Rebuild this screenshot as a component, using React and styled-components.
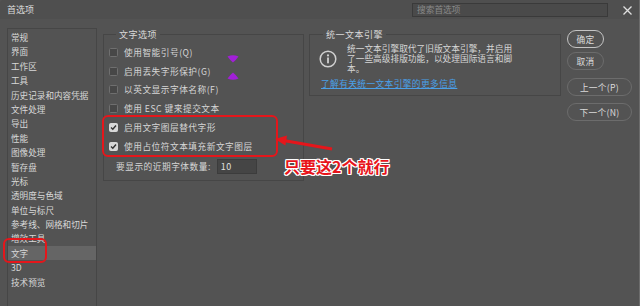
import React from "react";
import styled, { createGlobalStyle } from "styled-components";

const Global = createGlobalStyle`
  html, body { margin: 0; padding: 0; background: #535353; }
  #root { width: 640px; height: 306px; }
`;

const Window = styled.div`
  position: relative;
  width: 640px;
  height: 306px;
  overflow: hidden;
  box-sizing: border-box;
  background: #535353;
  border-right: 1px solid #6c6c6c;
  font-family: "Noto Sans CJK SC", "Noto Sans", sans-serif;
  color: #d6d6d6;
`;

const TitleBar = styled.div`
  height: 19px;
  display: flex;
  align-items: center;
  padding-left: 7px;
  background: #4f4f4f;
  border-top-left-radius: 4px;
`;

const Title = styled.div`
  font-size: 9px;
  color: #dcdcdc;
`;

const Search = styled.div`
  margin-left: auto;
  width: 196px;
  height: 14px;
  box-sizing: border-box;
  border: 1px solid #3a3a3a;
  background: #4a4a4a;
  font-size: 8.7px;
  line-height: 12px;
  padding-left: 4px;
  color: #8a8a8a;
`;

const Close = styled.svg`
  margin: 1px 7px 0 15px;
  width: 9px;
  height: 9px;
`;

const Body = styled.div`
  display: flex;
  align-items: flex-start;
  padding: 9px 0 0 7px;
`;

const Sidebar = styled.div`
  width: 90px;
  height: 300px;
  box-sizing: border-box;
  border: 1px solid #464646;
  padding-top: 1px;
`;

const SideItem = styled.div`
  height: 14.4px;
  line-height: 14.4px;
  padding-left: 3px;
  font-size: 8.6px;
  white-space: nowrap;
  background: ${(p) => (p.$active ? "#656565" : "transparent")};
  color: #d8d8d8;
`;

const Group = styled.fieldset`
  margin: 0 0 0 ${(p) => p.$ml}px;
  width: ${(p) => p.$w}px;
  box-sizing: border-box;
  min-width: 0;
  border: 1px solid #464646;
  padding: ${(p) => p.$pad};
`;

const Legend = styled.legend`
  font-size: 9px;
  letter-spacing: 0.5px;
  line-height: 13px;
  padding: 0 3px;
  margin-left: ${(p) => p.$ml}px;
  color: #d8d8d8;
`;

const CheckRow = styled.div`
  height: 18.75px;
  display: flex;
  align-items: center;
  gap: 6px;
  font-size: 8.7px;
  letter-spacing: 0.5px;
  white-space: nowrap;
`;

const Box = styled.span`
  width: 9px;
  height: 9px;
  box-sizing: border-box;
  border-radius: 1.5px;
  border: 1px solid ${(p) => (p.$checked ? "#d8d8d8" : "#6f6f6f")};
  background: ${(p) => (p.$checked ? "#d8d8d8" : "#474747")};
  display: flex;
  align-items: center;
  justify-content: center;
  flex: none;
`;

const FieldRow = styled.div`
  height: 22px;
  display: flex;
  align-items: center;
  gap: 6px;
  padding-left: 7px;
  font-size: 8.7px;
  letter-spacing: 0.5px;
  white-space: nowrap;
`;

const Input = styled.div`
  width: 40px;
  height: 15px;
  box-sizing: border-box;
  border: 1px solid #3c3c3c;
  background: #454545;
  font-size: 9px;
  line-height: 13px;
  padding-left: 3px;
  color: #e0e0e0;
`;

const InfoRow = styled.div`
  display: flex;
  align-items: center;
  gap: 10px;
  padding-left: 1px;
`;

const InfoText = styled.div`
  width: 168px;
  font-size: 8.7px;
  line-height: 10px;
  color: #d6d6d6;
`;

const Link = styled.a`
  display: block;
  margin: 5px 0 0 3px;
  font-size: 8.7px;
  letter-spacing: 0.4px;
  line-height: 10px;
  color: #4aa0e8;
  text-decoration: underline;
`;

const Buttons = styled.div`
  margin-left: 6px;
  width: 65px;
  display: flex;
  flex-direction: column;
  align-items: flex-start;
`;

const Button = styled.div`
  margin-top: ${(p) => p.$mt}px;
  width: ${(p) => p.$w}px;
  height: 18px;
  box-sizing: border-box;
  border-radius: 9px;
  border: ${(p) => (p.$primary ? "1.5px solid #c4c4c4" : "1px solid #6c6c6c")};
  display: flex;
  align-items: center;
  justify-content: center;
  font-size: 8.7px;
  color: #dadada;
  letter-spacing: 0.3px;
`;

const RedBox = styled.div`
  position: absolute;
  left: ${(p) => p.$x}px;
  top: ${(p) => p.$y}px;
  width: ${(p) => p.$w}px;
  height: ${(p) => p.$h}px;
  box-sizing: border-box;
  border: 2px solid #e5161b;
  border-radius: 6px;
`;

const Overlay = styled.svg`
  position: absolute;
  left: ${(p) => p.$x}px;
  top: ${(p) => p.$y}px;
`;

const Note = styled.div`
  position: absolute;
  left: 284px;
  top: 156px;
  font-size: 16px;
  line-height: 20px;
  font-weight: 700;
  color: #e8141b;
  white-space: nowrap;
  text-shadow: 1px 0 0 #fff, -1px 0 0 #fff, 0 1px 0 #fff, 0 -1px 0 #fff,
    1px 1px 0 #fff, -1px -1px 0 #fff, 1px -1px 0 #fff, -1px 1px 0 #fff;
`;

const sideItems = [
  "常规", "界面", "工作区", "工具", "历史记录和内容凭据", "文件处理", "导出", "性能",
  "图像处理", "暂存盘", "光标", "透明度与色域", "单位与标尺", "参考线、网格和切片",
  "增效工具", "文字", "3D", "技术预览",
];

const options = [
  ["使用智能引号(Q)", false],
  ["启用丢失字形保护(G)", false],
  ["以英文显示字体名称(F)", false],
  ["使用 ESC 键来提交文本", false],
  ["启用文字图层替代字形", true],
  ["使用占位符文本填充新文字图层", true],
];

const Check = () => (
  <svg width="7" height="7" viewBox="0 0 7 7">
    <path d="M1 3.6 L2.8 5.3 L6 1.5" fill="none" stroke="#333" strokeWidth="1.4" />
  </svg>
);

export default function App() {
  return (
    <Window>
      <Global />
      <TitleBar>
        <Title>首选项</Title>
        <Search>搜索首选项</Search>
        <Close viewBox="0 0 9 9">
          <path d="M0.5 0.5 L8.5 8.5 M8.5 0.5 L0.5 8.5" stroke="#e0e0e0" strokeWidth="1.3" />
        </Close>
      </TitleBar>
      <Body>
        <Sidebar>
          {sideItems.map((s) => (
            <SideItem key={s} $active={s === "文字"}>{s}</SideItem>
          ))}
        </Sidebar>
        <Group $ml={6} $w={201} $pad="2px 0 2px 5px">
          <Legend $ml={7}>文字选项</Legend>
          {options.map(([t, c]) => (
            <CheckRow key={t}>
              <Box $checked={c}>{c && <Check />}</Box>
              {t}
            </CheckRow>
          ))}
          <FieldRow>
            要显示的近期字体数量:
            <Input>10</Input>
          </FieldRow>
        </Group>
        <Group $ml={5} $w={252} $pad="3px 0 6px 8px">
          <Legend $ml={5}>统一文本引擎</Legend>
          <InfoRow>
            <svg width="18" height="18" viewBox="0 0 18 18">
              <circle cx="9" cy="9" r="7.8" fill="none" stroke="#d0d0d0" strokeWidth="1.5" />
              <circle cx="9" cy="5.4" r="1.1" fill="#d0d0d0" />
              <rect x="8.1" y="7.5" width="1.8" height="5.8" fill="#d0d0d0" />
            </svg>
            <InfoText>统一文本引擎取代了旧版文本引擎，并启用了一些高级排版功能，以处理国际语言和脚本。</InfoText>
          </InfoRow>
          <Link>了解有关统一文本引擎的更多信息</Link>
        </Group>
        <Buttons>
          <Button $mt={2} $w={37} $primary>确定</Button>
          <Button $mt={4} $w={37}>取消</Button>
          <Button $mt={8} $w={65}>上一个(P)</Button>
          <Button $mt={7} $w={65}>下一个(N)</Button>
        </Buttons>
      </Body>

      <RedBox $x={3} $y={238} $w={44} $h={25} />
      <RedBox $x={102} $y={115} $w={176} $h={42} />
      <Overlay $x={270} $y={128} width="70" height="30" viewBox="0 0 70 30">
        <line x1="62" y1="21" x2="15" y2="12.8" stroke="#e5161b" strokeWidth="3" />
        <polygon points="5,11 17,7.5 15.4,17.5" fill="#e5161b" />
      </Overlay>
      <Note>只要这2个就行</Note>
      <Overlay $x={227} $y={55} width="12" height="8" viewBox="0 0 12 8">
        <path d="M0.5 1.5 Q6 -1 11.5 1.5 Q9 5 6 7.5 Q3 5 0.5 1.5Z" fill="#a21fd8" />
      </Overlay>
      <Overlay $x={227} $y={72} width="12" height="8" viewBox="0 0 12 8">
        <path d="M0.5 6.5 Q6 9 11.5 6.5 Q9 3 6 0.5 Q3 3 0.5 6.5Z" fill="#a21fd8" />
      </Overlay>
    </Window>
  );
}
